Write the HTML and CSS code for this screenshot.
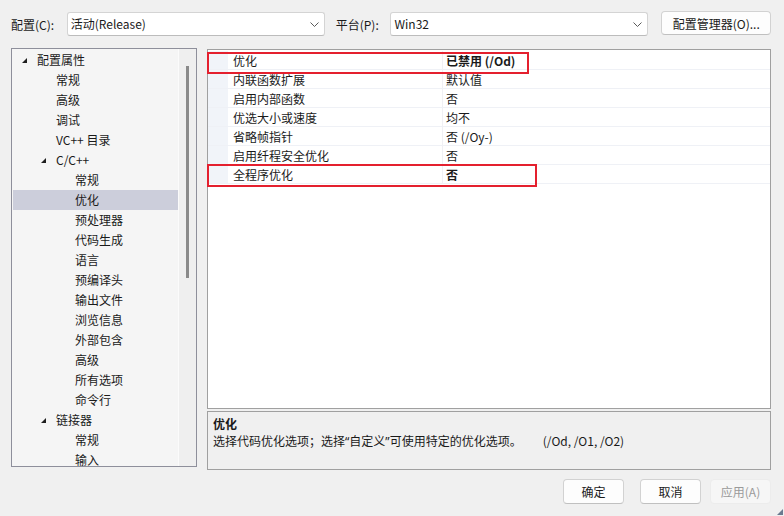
FILE: index.html
```html
<!DOCTYPE html>
<html lang="zh-CN">
<head>
    <meta charset="UTF-8">
    <meta name="viewport" content="width=device-width, initial-scale=1.0">
    <title>属性页</title>
    <link rel="stylesheet" href="styles.css">
</head>
<body>
    <div class="dialog">
        <div class="toolbar">
            <label class="tb-label">配置(C):</label>
            <div class="combo">
                <span>活动(Release)</span>
                <svg class="chevron" width="9" height="5" viewBox="0 0 9 5"><path d="M0.5 0.5 L4.5 4.5 L8.5 0.5" fill="none" stroke="#5a5a5a" stroke-width="1"/></svg>
            </div>
            <label class="tb-label tb-label-2">平台(P):</label>
            <div class="combo">
                <span>Win32</span>
                <svg class="chevron" width="9" height="5" viewBox="0 0 9 5"><path d="M0.5 0.5 L4.5 4.5 L8.5 0.5" fill="none" stroke="#5a5a5a" stroke-width="1"/></svg>
            </div>
            <button class="btn btn-manager">配置管理器(O)...</button>
        </div>

        <div class="main">
            <div class="tree">
                <ul class="tree-list">
                    <li class="lvl0"><i class="tri"></i>配置属性</li>
                    <li class="lvl1">常规</li>
                    <li class="lvl1">高级</li>
                    <li class="lvl1">调试</li>
                    <li class="lvl1">VC++ 目录</li>
                    <li class="lvl1 open"><i class="tri"></i>C/C++</li>
                    <li class="lvl2">常规</li>
                    <li class="lvl2 selected">优化</li>
                    <li class="lvl2">预处理器</li>
                    <li class="lvl2">代码生成</li>
                    <li class="lvl2">语言</li>
                    <li class="lvl2">预编译头</li>
                    <li class="lvl2">输出文件</li>
                    <li class="lvl2">浏览信息</li>
                    <li class="lvl2">外部包含</li>
                    <li class="lvl2">高级</li>
                    <li class="lvl2">所有选项</li>
                    <li class="lvl2">命令行</li>
                    <li class="lvl1 open"><i class="tri"></i>链接器</li>
                    <li class="lvl2">常规</li>
                    <li class="lvl2">输入</li>
                </ul>
                <div class="vscroll"><div class="thumb"></div></div>
            </div>

            <div class="right">
                <div class="grid">
                    <div class="row"><div class="gutter"></div><div class="name">优化</div><div class="value bold">已禁用 (/Od)</div></div>
                    <div class="row"><div class="gutter"></div><div class="name">内联函数扩展</div><div class="value">默认值</div></div>
                    <div class="row"><div class="gutter"></div><div class="name">启用内部函数</div><div class="value">否</div></div>
                    <div class="row"><div class="gutter"></div><div class="name">优选大小或速度</div><div class="value">均不</div></div>
                    <div class="row"><div class="gutter"></div><div class="name">省略帧指针</div><div class="value">否 (/Oy-)</div></div>
                    <div class="row"><div class="gutter"></div><div class="name">启用纤程安全优化</div><div class="value">否</div></div>
                    <div class="row"><div class="gutter"></div><div class="name">全程序优化</div><div class="value bold">否</div></div>
                    <div class="mark mark-1"></div>
                    <div class="mark mark-2"></div>
                </div>
                <div class="desc">
                    <div class="desc-title">优化</div>
                    <div class="desc-text">选择代码优化选项；选择<span class="q">“</span>自定义<span class="q">”</span>可使用特定的优化选项。<span class="desc-flags">(/Od, /O1, /O2)</span></div>
                </div>
            </div>
        </div>

        <div class="footer">
            <button class="btn btn-ok">确定</button>
            <button class="btn btn-cancel">取消</button>
            <button class="btn btn-apply" disabled>应用(A)</button>
        </div>

        <svg class="grip" width="6" height="6" viewBox="0 0 6 6"><path d="M6 0 L6 6 L0 6 Z" fill="#6b7a90"/></svg>
    </div>
</body>
</html>
```

FILE: styles.css
```css
* {
    box-sizing: border-box;
}
body {
    margin: 0;
    background-color: #f0f0f0;
    font-family: "Noto Sans CJK SC", "Noto Sans", sans-serif;
    font-size: 12px;
    color: #1a1a1a;
}
.dialog {
    position: relative;
    width: 784px;
    height: 516px;
    padding: 11px 13px 0 11px;
}

/* barra superior */
.toolbar {
    display: flex;
    align-items: flex-start;
    height: 25px;
}
.tb-label {
    width: 56px;
    line-height: 26px;
    margin-top: 1px;
}
.tb-label-2 {
    width: 55px;
    margin-left: 11px;
}
.combo {
    display: flex;
    align-items: center;
    justify-content: space-between;
    width: 259px;
    height: 24px;
    margin-top: 1px;
    padding: 0 5px 0 3px;
    background-color: #fff;
    border: 1px solid #d4d4d4;
    border-bottom-color: #bcbcbc;
    border-radius: 3px;
}
.combo span {
    line-height: 22px;
}
.btn {
    font-family: inherit;
    font-size: 12px;
    color: #1a1a1a;
    background-color: #fdfdfd;
    border: 1px solid #d2d2d2;
    border-bottom-color: #c0c0c0;
    border-radius: 4px;
    padding: 0;
    height: 25px;
}
.btn-manager {
    width: 110px;
    margin-left: 13px;
    height: 24px;
}

/* contenido */
.main {
    display: flex;
    margin-top: 12px;
    height: 421px;
}
.tree {
    display: flex;
    width: 186px;
    height: 419px;
    border: 1px solid #8e8f9b;
    background-color: #f5f5f5;
}
.tree-list {
    list-style: none;
    margin: 0;
    padding: 1px 0 0 1px;
    width: 166px;
    overflow: hidden;
}
.tree-list li {
    display: flex;
    align-items: center;
    height: 20px;
    line-height: 20px;
    white-space: nowrap;
}
.tri {
    display: inline-block;
    width: 0;
    height: 0;
    border-left: 5px solid transparent;
    border-bottom: 5px solid #1e1e1e;
    margin-right: 10px;
    margin-top: 1px;
}
.lvl0 {
    padding-left: 9px;
}
.lvl1 {
    padding-left: 43px;
}
.lvl1.open {
    padding-left: 28px;
}
.lvl2 {
    padding-left: 62px;
}
.selected {
    background-color: #cccedb;
}
.vscroll {
    width: 18px;
    border-left: 1px solid #fbfbfb;
    background-color: #efefef;
    padding: 17px 0 0 7px;
}
.thumb {
    width: 3px;
    height: 212px;
    background-color: #8a8a8a;
}

.right {
    margin-left: 10px;
    width: 566px;
}
.grid {
    position: relative;
    height: 360px;
    margin-top: 1px;
    border: 1px solid #a0a0a0;
    background-color: #fff;
    padding-top: 1px;
}
.row {
    display: flex;
    height: 19px;
    border-bottom: 1px solid #eff1f6;
    line-height: 19px;
}
.gutter {
    width: 20px;
    background-color: #f1f4f9;
}
.name {
    width: 215px;
    padding-left: 5px;
    border-right: 1px solid #f0f0f4;
}
.value {
    padding-left: 3px;
}
.bold {
    font-weight: bold;
}
.mark {
    position: absolute;
    left: -1px;
    border: 2px solid #e4202e;
}
.mark-1 {
    top: 2px;
    width: 322px;
    height: 22px;
}
.mark-2 {
    top: 114px;
    width: 330px;
    height: 23px;
}

.desc {
    margin-top: 2px;
    height: 59px;
    border: 1px solid #a0a0a0;
    background-color: #f0f0f0;
    padding: 3px 0 0 5px;
    line-height: 17px;
}
.desc-title {
    font-weight: bold;
}
.q {
    font-family: "Noto Sans", sans-serif;
}
.desc-flags {
    margin-left: 21px;
}

/* botones */
.footer {
    display: flex;
    justify-content: flex-end;
    margin-top: 10px;
}
.btn-ok, .btn-cancel, .btn-apply {
    width: 61px;
}
.btn-cancel {
    margin-left: 16px;
}
.btn-apply {
    margin-left: 9px;
    color: #9a9a9a;
    background-color: #f6f6f6;
    border-color: #ececec;
}
.grip {
    position: absolute;
    right: 1px;
    bottom: 1px;
}
```
